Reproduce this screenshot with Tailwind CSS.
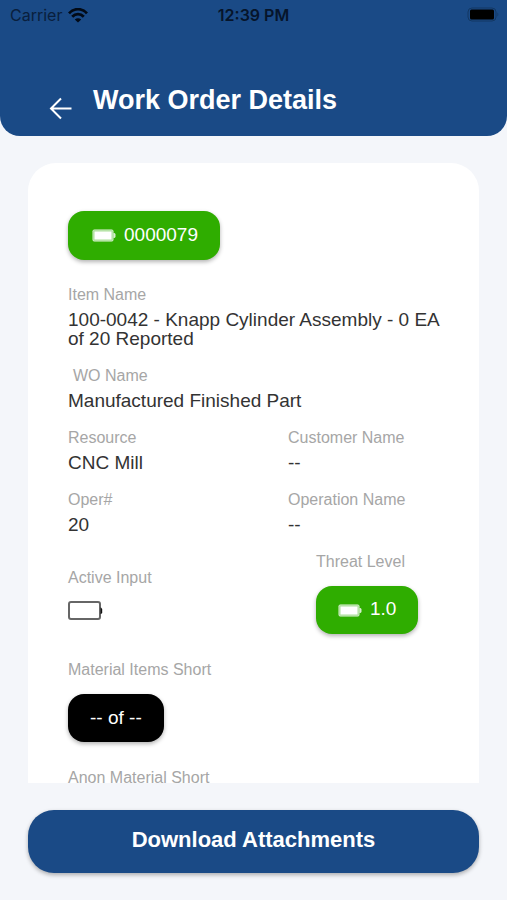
<!DOCTYPE html>
<html lang="en">
<head>
<meta charset="utf-8">
<meta name="viewport" content="width=device-width, initial-scale=1">
<title>Work Order Details</title>
<script src="https://cdn.jsdelivr.net/npm/@tailwindcss/browser@4"></script>
</head>
<body class="flex h-screen flex-col bg-[#f4f6fa] font-['Liberation_Sans',Arial,sans-serif] text-[#333]">
  <header class="shrink-0 rounded-b-[20px] bg-[#1a4a86] pb-4">
    <div class="grid grid-cols-3 items-center px-2 pt-[5px] font-[Inter,sans-serif] text-base leading-5 text-[#06152b]">
      <div class="flex items-center gap-[6px] pl-[2px]">
        <span class="opacity-80">Carrier</span>
        <svg class="h-[15px] w-5" viewBox="0 0 20 15" fill="none" stroke="#020a16" stroke-width="2.8" aria-label="Wi-Fi">
          <path d="M1 5.4C6-.2 14-.2 19 5.4"/>
          <path d="M4.2 8.8c3.4-3.5 8.2-3.5 11.6 0"/>
          <path d="M10 14.6 6.8 11.4c1.8-1.7 4.6-1.7 6.4 0z" fill="#020a16" stroke="none"/>
        </svg>
      </div>
      <span class="text-center font-semibold">12:39 PM</span>
      <svg class="h-4 w-8 justify-self-end" viewBox="0 0 32 16" aria-label="Battery full">
        <rect x="1" y="1" width="28" height="13" rx="4" fill="none" stroke="#123763"/>
        <rect x="3" y="2.500" width="24" height="10" rx="1.500" fill="#000"/>
        <path d="M30.500 5.500v4c1-.5 1-3.500 0-4z" fill="#123763"/>
      </svg>
    </div>
    <div class="flex items-start pl-12 pt-[58px]">
      <a href="#" aria-label="Back" class="mt-[13px] block">
        <svg class="h-6 w-6" viewBox="0 0 24 24" fill="none" stroke="#fff" stroke-width="2"><path d="M23.500 12.500H3M13 2.500 3 12.500 13 22.500"/></svg>
      </a>
      <h1 class="ml-[21px] text-[27px] font-bold leading-[34px] text-white">Work Order Details</h1>
    </div>
  </header>

  <main class="min-h-0 flex-1 overflow-hidden px-7 pt-[27px]">
    <section class="rounded-[28px] bg-white px-10 pb-12 pt-12">
      <button class="flex h-[49px] items-center gap-2 rounded-2xl bg-[#2fad00] pl-6 pr-[22px] pb-[2px] text-[19px] leading-6 text-white shadow-[0_2px_4px_rgba(0,0,0,0.3)]">
        <svg class="mt-[2px] h-[13px] w-6" viewBox="0 0 24 13" aria-hidden="true"><rect x=".8" y=".8" width="20.400" height="11.400" rx="1.500" fill="#fff" fill-opacity=".6" stroke="#fff" stroke-opacity=".5"/><rect x="2.500" y="2.500" width="17" height="8" fill="#fff"/><path d="M21.500 4h1l1 1v3l-1 1h-1z" fill="#fff" fill-opacity=".8"/></svg>
        <span>0000079</span>
      </button>

      <dl class="mt-[26px] grid grid-cols-[220px_1fr] gap-y-[19px] text-[19px] leading-[19px]">
        <div class="col-span-2">
          <dt class="mb-[6px] text-base leading-[18px] text-[#a6a6a6]">Item Name</dt>
          <dd>100-0042 - Knapp Cylinder Assembly - 0 EA of 20 Reported</dd>
        </div>
        <div class="col-span-2">
          <dt class="mb-[6px] pl-[5px] text-base leading-[18px] text-[#a6a6a6]">WO Name</dt>
          <dd>Manufactured Finished Part</dd>
        </div>
        <div>
          <dt class="mb-[6px] text-base leading-[18px] text-[#a6a6a6]">Resource</dt>
          <dd>CNC Mill</dd>
        </div>
        <div>
          <dt class="mb-[6px] text-base leading-[18px] text-[#a6a6a6]">Customer Name</dt>
          <dd>--</dd>
        </div>
        <div>
          <dt class="mb-[6px] text-base leading-[18px] text-[#a6a6a6]">Oper#</dt>
          <dd>20</dd>
        </div>
        <div>
          <dt class="mb-[6px] text-base leading-[18px] text-[#a6a6a6]">Operation Name</dt>
          <dd>--</dd>
        </div>
        <div class="pt-4">
          <dt class="mb-[14px] text-base leading-[18px] text-[#a6a6a6]">Active Input</dt>
          <dd>
            <svg class="h-5 w-9" viewBox="0 0 36 20" aria-label="Battery empty"><rect x="1" y="1" width="31" height="17" rx="2" fill="#fff" stroke="#666" stroke-width="2"/><path d="M32.500 6.500h.5l1.200 1.500v4L33 13h-.5z" fill="#111"/></svg>
          </dd>
        </div>
        <div class="pl-7">
          <dt class="mb-[15px] text-base leading-[18px] text-[#a6a6a6]">Threat Level</dt>
          <dd>
            <button class="flex h-12 items-center gap-2 rounded-2xl bg-[#2fad00] pl-[22px] pr-[22px] pb-[2px] leading-6 text-white shadow-[0_2px_4px_rgba(0,0,0,0.3)]">
              <svg class="mt-[2px] h-[13px] w-6" viewBox="0 0 24 13" aria-hidden="true"><rect x=".8" y=".8" width="20.400" height="11.400" rx="1.500" fill="#fff" fill-opacity=".6" stroke="#fff" stroke-opacity=".5"/><rect x="2.500" y="2.500" width="17" height="8" fill="#fff"/><path d="M21.500 4h1l1 1v3l-1 1h-1z" fill="#fff" fill-opacity=".8"/></svg>
              <span>1.0</span>
            </button>
          </dd>
        </div>
        <div class="col-span-2 mt-2">
          <dt class="mb-[15px] text-base leading-[18px] text-[#a6a6a6]">Material Items Short</dt>
          <dd>
            <button class="h-12 rounded-2xl bg-black px-[22px] pb-[2px] text-white shadow-[0_2px_4px_rgba(0,0,0,0.3)]">-- of --</button>
          </dd>
        </div>
        <div class="col-span-2 mt-2">
          <dt class="text-base leading-[18px] text-[#a6a6a6]">Anon Material Short</dt>
        </div>
      </dl>
    </section>
  </main>

  <footer class="shrink-0 px-7 py-[27px]">
    <button class="h-[63px] w-full rounded-[26px] bg-[#1a4a86] pb-1 text-[22px] font-bold text-white shadow-[0_2px_4px_rgba(0,0,0,0.3)]">Download Attachments</button>
  </footer>
</body>
</html>
